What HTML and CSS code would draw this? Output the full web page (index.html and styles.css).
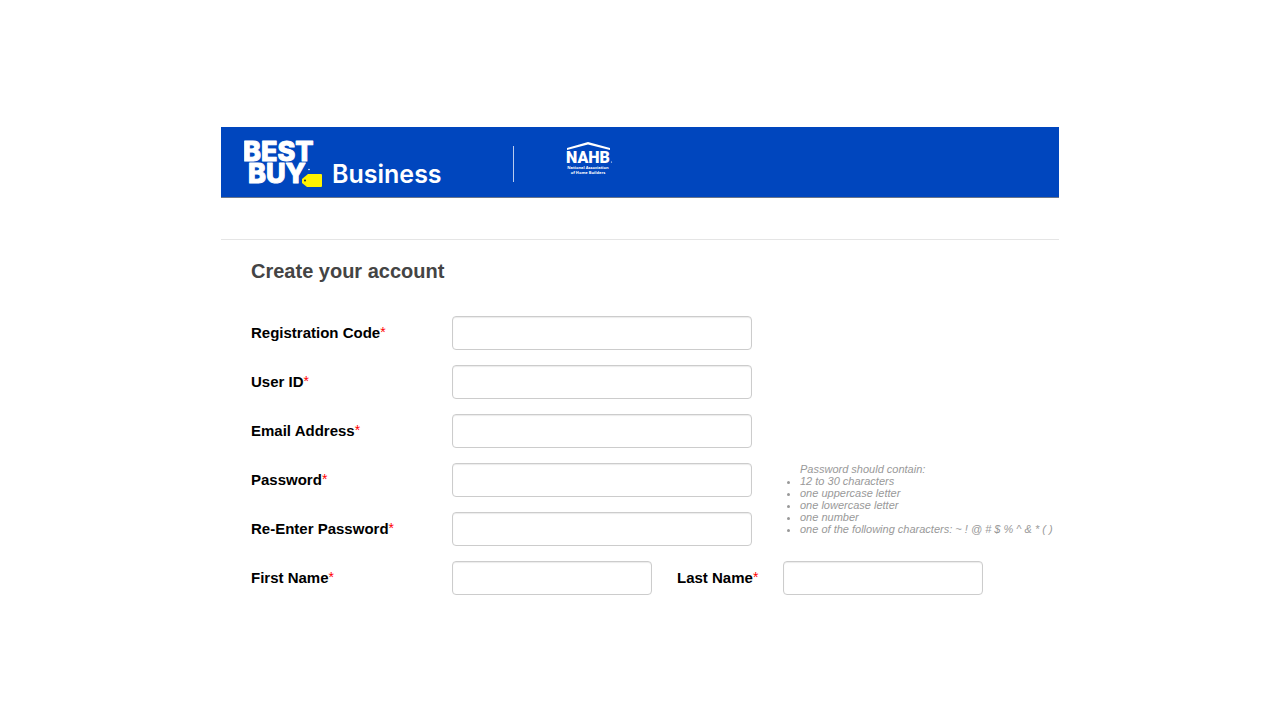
FILE: index.html
```html
<!DOCTYPE html>
<html lang="en">
  <head>
    <meta charset="UTF-8" />
    <meta name="viewport" content="width=device-width, initial-scale=1.0" />
    <title>Create your account</title>
    <link rel="stylesheet" href="styles.css">
  </head>
  <body>
    <div class="container">
      <header class="banner">
        <svg class="logo" width="200" height="66" viewBox="0 -8 200 66" role="img" aria-label="Best Buy Business">
          <text class="logo-bold" x="-1" y="22">BEST</text>
          <text class="logo-bold" x="4" y="44">BUY</text>
          <path d="M58 44 V40 L64 35 H77 Q78 35 78 36 V47 Q78 48 77 48 H63 Z" fill="#fff200" />
          <circle cx="61" cy="41.5" r="1" fill="#1d252c" />
          <circle cx="65" cy="30.5" r="0.8" fill="#fff" />
          <text class="logo-name" x="88" y="44">Business</text>
        </svg>
        <div class="divider"></div>
        <svg class="partner" width="50" height="46" viewBox="0 0 50 46" role="img" aria-label="NAHB National Association of Home Builders">
          <path d="M1 9 V7 L22 1 L44 7 V9 L22 3.5 Z" fill="#fff" />
          <text class="partner-bold" x="0" y="22">NAHB</text>
          <circle cx="45.5" cy="21" r="0.6" fill="#fff" />
          <text class="partner-small" x="22" y="28">National Association</text>
          <text class="partner-small" x="22" y="33">of Home Builders</text>
        </svg>
      </header>
      <form action="/register" method="post">
        <h1>Create your account</h1>
        <div class="row">
          <label for="code">Registration Code<span class="required">*</span></label>
          <input type="text" id="code" name="code" required />
        </div>
        <div class="row">
          <label for="user-id">User ID<span class="required">*</span></label>
          <input type="text" id="user-id" name="userId" required />
        </div>
        <div class="row">
          <label for="email">Email Address<span class="required">*</span></label>
          <input type="email" id="email" name="email" required />
        </div>
        <div class="password-group">
          <div class="password-rows">
            <div class="row">
              <label for="password">Password<span class="required">*</span></label>
              <input type="password" id="password" name="password" required />
            </div>
            <div class="row">
              <label for="password2">Re-Enter Password<span class="required">*</span></label>
              <input type="password" id="password2" name="password2" required />
            </div>
          </div>
          <div class="hint">
            Password should contain:
            <ul>
              <li>12 to 30 characters</li>
              <li>one uppercase letter</li>
              <li>one lowercase letter</li>
              <li>one number</li>
              <li>one of the following characters: ~ ! @ # $ % ^ &amp; * ( )</li>
            </ul>
          </div>
        </div>
        <div class="row">
          <label for="first-name">First Name<span class="required">*</span></label>
          <input type="text" id="first-name" class="short" name="firstName" required />
          <label for="last-name" class="second">Last Name<span class="required">*</span></label>
          <input type="text" id="last-name" class="short" name="lastName" required />
        </div>
      </form>
    </div>
  </body>
</html>
```
FILE: styles.css
```css
* {
  box-sizing: border-box;
}
body {
  margin: 0;
  padding: 127px 20px 40px;
  font-family: "Liberation Sans", Arial, sans-serif;
  background-color: #fff;
  color: #000;
}
.container {
  max-width: 838px;
  margin: 0 auto;
}
.banner {
  display: flex;
  align-items: center;
  padding: 4px 23px 0;
  background-color: #0046be;
  border-bottom: 1px solid #6b7689;
}
.divider {
  width: 1px;
  height: 36px;
  margin: 0 52px 0 69px;
  background-color: #b9cbee;
}
.logo text,
.partner text {
  fill: #fff;
}
.logo-bold {
  font: 800 27px Inter, sans-serif;
  stroke: #fff;
  stroke-width: 1px;
  stroke-linejoin: round;
}
.logo-name {
  font: 600 25px Inter, sans-serif;
}
.partner-bold {
  font: 900 16px Roboto, sans-serif;
}
.partner-small {
  font: 700 4px "Open Sans", sans-serif;
  text-anchor: middle;
}
form {
  margin-top: 41px;
  padding: 20px 0 0 30px;
  border-top: 1px solid #e5e5e5;
}
h1 {
  margin: 0 0 34px;
  font-size: 20px;
  line-height: 22px;
  color: #444;
}
.row {
  display: flex;
  align-items: center;
  margin-bottom: 15px;
}
label {
  width: 201px;
  padding-bottom: 2px;
  font-size: 15px;
  font-weight: bold;
}
label.second {
  width: 106px;
  margin-left: 25px;
}
.required {
  color: #f00;
  font-size: 14px;
  font-weight: normal;
  line-height: 1;
  vertical-align: 1px;
}
input {
  width: 300px;
  height: 34px;
  padding: 6px 12px;
  border: 1px solid #ccc;
  border-radius: 4px;
  box-shadow: inset 0 1px 1px rgba(0, 0, 0, 0.08);
  background-color: #fff;
  font-size: 14px;
}
input.short {
  width: 200px;
}
.password-group {
  display: flex;
}
.hint {
  padding-left: 48px;
  font-size: 11px;
  font-style: italic;
  line-height: 12px;
  color: #999;
  white-space: nowrap;
}
.hint ul {
  margin: 0;
  padding: 0;
}
```
